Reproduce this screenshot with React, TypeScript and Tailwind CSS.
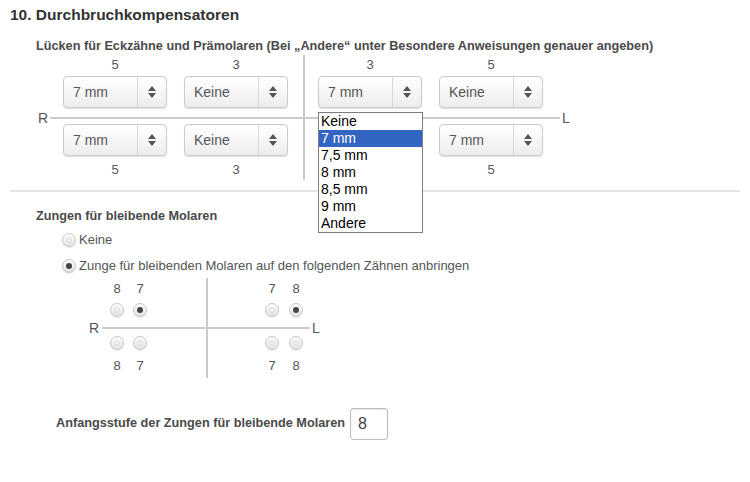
import React from "react";

function Arrows() {
  return (
    <span className="flex w-[29px] flex-col items-center justify-center gap-[2px] border-l border-[#d9d9d9]">
      <svg width="8" height="5" viewBox="0 0 8 5">
        <path d="M4 0 L8 5 L0 5 Z" fill="#555" />
      </svg>
      <svg width="8" height="5" viewBox="0 0 8 5">
        <path d="M0 0 L8 0 L4 5 Z" fill="#555" />
      </svg>
    </span>
  );
}

function Select({ value, hidden }: { value: string; hidden?: boolean }) {
  return (
    <div
      className={`flex h-8 w-[104px] items-stretch rounded-[4px] border border-[#cbcbcb] bg-linear-to-b from-white to-[#ededed] shadow-[0_1px_1px_rgba(0,0,0,0.12)] ${hidden ? "invisible" : ""}`}
    >
      <span className="flex flex-1 items-center pl-[9px] text-[14px] text-[#555]">{value}</span>
      <Arrows />
    </div>
  );
}

const options = ["Keine", "7 mm", "7,5 mm", "8 mm", "8,5 mm", "9 mm", "Andere"];

function OpenSelect({ value }: { value: string }) {
  return (
    <div className="relative">
      <Select value={value} />
      <div className="absolute left-0 top-[36px] z-10 w-[105px] border border-[#7d7d7d] bg-white">
        {options.map((o) => (
          <div
            key={o}
            className={`h-[17px] pl-[2px] text-[14px] leading-[17px] ${o === value ? "bg-[#3366c2] text-white" : "text-black"}`}
          >
            {o}
          </div>
        ))}
      </div>
    </div>
  );
}

function Radio({ checked }: { checked?: boolean }) {
  return (
    <span className="flex h-[14px] w-[14px] shrink-0 items-center justify-center rounded-full border border-[#c6c6c6] bg-linear-to-b from-white to-[#e2e2e2] shadow-[0_1px_1px_rgba(0,0,0,0.08)]">
      {checked ? (
        <span className="h-[6px] w-[6px] rounded-full bg-[#444]" />
      ) : (
        <span className="h-[6px] w-[6px] rounded-full border border-[#dedede]" />
      )}
    </span>
  );
}

function NumRow({ nums }: { nums: string[] }) {
  return (
    <div className="flex gap-[17px] text-[13px] leading-[14px] text-[#555]">
      {nums.map((n, i) => (
        <span key={i} className="w-[104px] text-center">
          {n}
        </span>
      ))}
    </div>
  );
}

function MolarNums({ nums, gap }: { nums: string[]; gap: string }) {
  return (
    <div className={`flex ${gap} text-[13px] leading-[14px] text-[#555]`}>
      {nums.map((n, i) => (
        <span key={i} className="w-[14px] text-center">
          {n}
        </span>
      ))}
    </div>
  );
}

export default function App() {
  return (
    <div className="h-[482px] w-[750px] overflow-hidden bg-white font-['Liberation_Sans',Arial,sans-serif] text-[#444]">
      <h2 className="pl-[10px] pt-[6px] text-[15.5px] font-bold leading-[18px] text-[#333]">
        10. Durchbruchkompensatoren
      </h2>
      <p className="mt-[14px] pl-[36px] text-[12.7px] font-bold leading-[16px] text-[#4a4a4a]">
        Lücken für Eckzähne und Prämolaren (Bei „Andere“ unter Besondere Anweisungen genauer angeben)
      </p>

      {/* Eckzähne / Prämolaren cross */}
      <div className="ml-[38px] mt-[1px] flex w-[540px] flex-col">
        <div className="flex pl-[12px]">
          <div className="w-[255px] border-r-2 border-[#cacaca] pb-[9px] pl-[13px] pt-[3px]">
            <NumRow nums={["5", "3"]} />
            <div className="mt-[4px] flex gap-[17px]">
              <Select value="7 mm" />
              <Select value="Keine" />
            </div>
          </div>
          <div className="pb-[9px] pl-[13px] pt-[3px]">
            <NumRow nums={["3", "5"]} />
            <div className="mt-[4px] flex gap-[17px]">
              <OpenSelect value="7 mm" />
              <Select value="Keine" />
            </div>
          </div>
        </div>
        <div className="flex h-[2px] items-center text-[14px] text-[#555]">
          <span className="w-[12px]">R</span>
          <span className="h-[2px] w-[510px] bg-[#cacaca]" />
          <span className="pl-[2px]">L</span>
        </div>
        <div className="flex pl-[12px]">
          <div className="w-[255px] border-r-2 border-[#cacaca] pb-[3px] pl-[13px] pt-[5px]">
            <div className="flex gap-[17px]">
              <Select value="7 mm" />
              <Select value="Keine" />
            </div>
            <div className="mt-[7px]">
              <NumRow nums={["5", "3"]} />
            </div>
          </div>
          <div className="pb-[3px] pl-[13px] pt-[5px]">
            <div className="flex gap-[17px]">
              <Select value="7 mm" hidden />
              <Select value="7 mm" />
            </div>
            <div className="mt-[7px]">
              <NumRow nums={["3", "5"]} />
            </div>
          </div>
        </div>
      </div>

      <div className="mx-[10px] mt-[10px] h-[2px] bg-[#e4e4e4]" />

      <p className="mt-[16px] pl-[36px] text-[12.7px] font-bold leading-[16px] text-[#4a4a4a]">
        Zungen für bleibende Molaren
      </p>
      <div className="mt-[7px] flex h-[18px] items-center gap-[3px] pl-[62px] text-[13px] text-[#555]">
        <Radio />
        <span>Keine</span>
      </div>
      <div className="mt-[8px] flex h-[18px] items-center gap-[3px] pl-[62px] text-[13px] text-[#555]">
        <Radio checked />
        <span>Zunge für bleibenden Molaren auf den folgenden Zähnen anbringen</span>
      </div>

      {/* Molar cross */}
      <div className="ml-[89px] mt-[3px] flex w-[240px] flex-col">
        <div className="flex pl-[13px]">
          <div className="w-[106px] border-r-2 border-[#cacaca] pb-[10px] pl-[8px] pt-[4px]">
            <MolarNums nums={["8", "7"]} gap="gap-[9px]" />
            <div className="mt-[7px] flex gap-[9px]">
              <Radio />
              <Radio checked />
            </div>
          </div>
          <div className="pb-[10px] pl-[57px] pt-[4px]">
            <MolarNums nums={["7", "8"]} gap="gap-[10px]" />
            <div className="mt-[7px] flex gap-[10px]">
              <Radio />
              <Radio checked />
            </div>
          </div>
        </div>
        <div className="flex h-[2px] items-center text-[14px] text-[#555]">
          <span className="w-[13px]">R</span>
          <span className="h-[2px] w-[208px] bg-[#cacaca]" />
          <span className="pl-[2px]">L</span>
        </div>
        <div className="flex pl-[13px]">
          <div className="w-[106px] border-r-2 border-[#cacaca] pb-[5px] pl-[8px] pt-[7px]">
            <div className="flex gap-[9px]">
              <Radio />
              <Radio />
            </div>
            <div className="mt-[9px]">
              <MolarNums nums={["8", "7"]} gap="gap-[9px]" />
            </div>
          </div>
          <div className="pb-[5px] pl-[57px] pt-[7px]">
            <div className="flex gap-[10px]">
              <Radio />
              <Radio />
            </div>
            <div className="mt-[9px]">
              <MolarNums nums={["7", "8"]} gap="gap-[10px]" />
            </div>
          </div>
        </div>
      </div>

      <div className="mt-[30px] flex items-center gap-[5px] pl-[56px]">
        <span className="text-[12.7px] font-bold text-[#4a4a4a]">
          Anfangsstufe der Zungen für bleibende Molaren
        </span>
        <span className="flex h-8 w-[38px] items-center rounded-[3px] border border-[#bdbdbd] pl-[7px] text-[16px] text-[#444] shadow-[inset_0_1px_2px_rgba(0,0,0,0.1)]">
          8
        </span>
      </div>
    </div>
  );
}
